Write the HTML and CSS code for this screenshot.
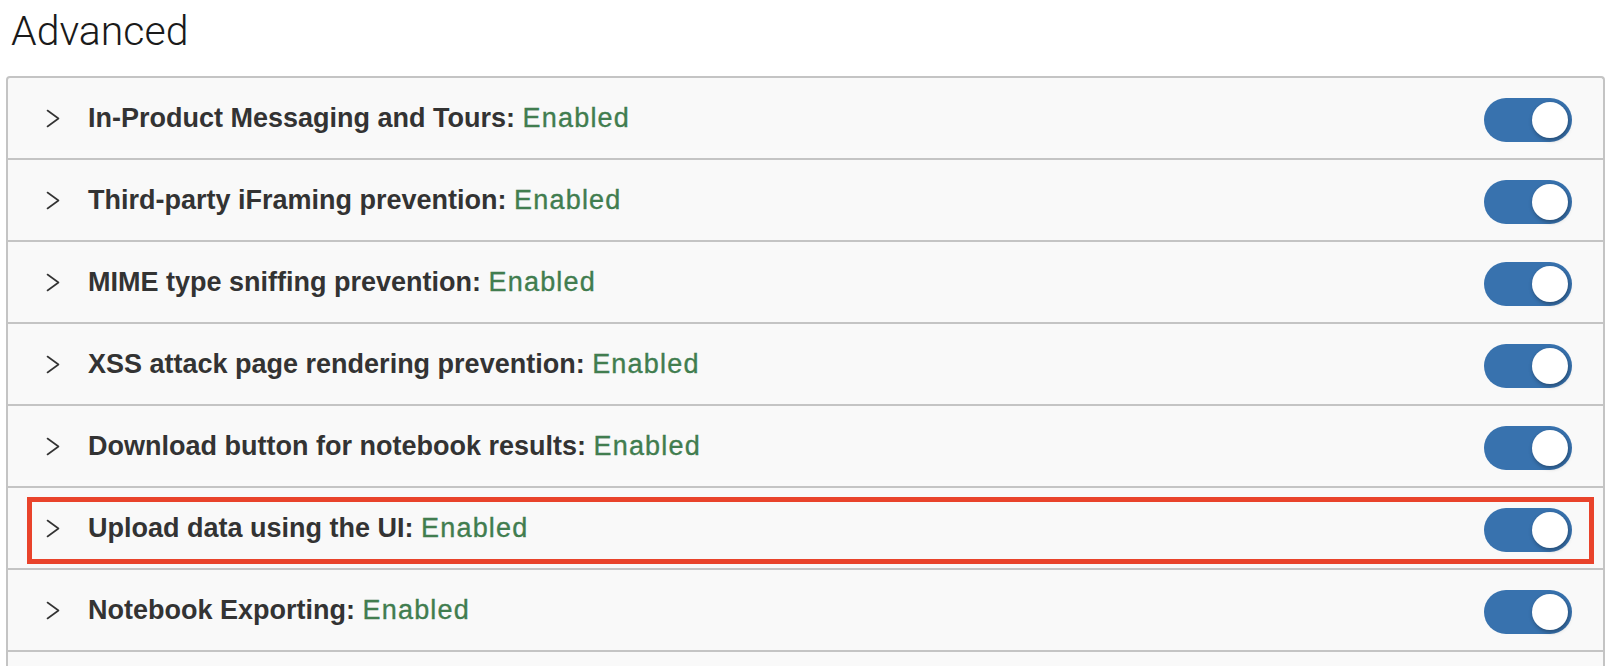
FILE: index.html
```html
<!DOCTYPE html>
<html>
<head>
<meta charset="utf-8">
<link rel="stylesheet" href="styles.css">
</head>
<body>
<h1 class="title">Advanced</h1>
<div class="panel">
  <div class="row">
    <svg class="chev" viewBox="0 0 14 19" width="14" height="19"><polyline points="1.5,1.5 12.5,9.5 1.5,17.5"/></svg>
    <div class="label">In-Product Messaging and Tours: <span class="status">Enabled</span></div>
    <div class="toggle"><div class="knob"></div></div>
  </div>
  <div class="row">
    <svg class="chev" viewBox="0 0 14 19" width="14" height="19"><polyline points="1.5,1.5 12.5,9.5 1.5,17.5"/></svg>
    <div class="label">Third-party iFraming prevention: <span class="status">Enabled</span></div>
    <div class="toggle"><div class="knob"></div></div>
  </div>
  <div class="row">
    <svg class="chev" viewBox="0 0 14 19" width="14" height="19"><polyline points="1.5,1.5 12.5,9.5 1.5,17.5"/></svg>
    <div class="label">MIME type sniffing prevention: <span class="status">Enabled</span></div>
    <div class="toggle"><div class="knob"></div></div>
  </div>
  <div class="row">
    <svg class="chev" viewBox="0 0 14 19" width="14" height="19"><polyline points="1.5,1.5 12.5,9.5 1.5,17.5"/></svg>
    <div class="label">XSS attack page rendering prevention: <span class="status">Enabled</span></div>
    <div class="toggle"><div class="knob"></div></div>
  </div>
  <div class="row">
    <svg class="chev" viewBox="0 0 14 19" width="14" height="19"><polyline points="1.5,1.5 12.5,9.5 1.5,17.5"/></svg>
    <div class="label">Download button for notebook results: <span class="status">Enabled</span></div>
    <div class="toggle"><div class="knob"></div></div>
  </div>
  <div class="row highlighted">
    <svg class="chev" viewBox="0 0 14 19" width="14" height="19"><polyline points="1.5,1.5 12.5,9.5 1.5,17.5"/></svg>
    <div class="label">Upload data using the UI: <span class="status">Enabled</span></div>
    <div class="toggle"><div class="knob"></div></div>
    <div class="highlight-box"></div>
  </div>
  <div class="row">
    <svg class="chev" viewBox="0 0 14 19" width="14" height="19"><polyline points="1.5,1.5 12.5,9.5 1.5,17.5"/></svg>
    <div class="label">Notebook Exporting: <span class="status">Enabled</span></div>
    <div class="toggle"><div class="knob"></div></div>
  </div>
  <div class="row row-partial"></div>
</div>
</body>
</html>
```
FILE: styles.css
```css
html, body {
  margin: 0;
  padding: 0;
  background: #ffffff;
  overflow: hidden;
}
body {
  width: 1622px;
  height: 666px;
}
.title {
  margin: 11px 0 25px 11px;
  height: 40px;
  font-family: Roboto, "Liberation Sans", sans-serif;
  font-weight: 300;
  font-size: 41px;
  line-height: 40px;
  color: #1a1a1a;
  letter-spacing: 0;
}
.panel {
  margin: 0 17px 0 6px;
  border: 2px solid #c4c4c4;
  border-bottom: none;
  border-radius: 4px 4px 0 0;
  background: #f9f9f9;
}
.row {
  position: relative;
  height: 80px;
  border-bottom: 2px solid #c4c4c4;
  display: flex;
  align-items: center;
  padding: 0 31px 0 38px;
  font-family: "Liberation Sans", Arial, sans-serif;
  font-size: 27px;
  color: #333333;
}
.row-partial {
  height: 14px;
  border-bottom: none;
}
.chev {
  flex: none;
  margin-top: 1px;
}
.chev polyline {
  fill: none;
  stroke: #333333;
  stroke-width: 1.6;
  stroke-linecap: round;
  stroke-linejoin: round;
}
.label {
  flex: 1;
  margin-left: 28px;
  font-weight: bold;
  white-space: nowrap;
}
.status {
  font-weight: normal;
  color: #417d4f;
  letter-spacing: 1.2px;
  -webkit-text-stroke: 0.35px #417d4f;
}
.toggle {
  flex: none;
  width: 88px;
  height: 44px;
  border-radius: 22px;
  background: #3872ae;
  position: relative;
  margin-top: 4px;
}
.knob {
  position: absolute;
  top: 4px;
  right: 4px;
  width: 36px;
  height: 36px;
  border-radius: 50%;
  background: #ffffff;
  box-shadow: 1px 2px 4px rgba(0, 0, 0, 0.35);
}
.highlight-box {
  position: absolute;
  left: 19px;
  right: 9px;
  top: 9px;
  bottom: 4px;
  border: 5px solid #e9432b;
  box-sizing: border-box;
  pointer-events: none;
}
```
